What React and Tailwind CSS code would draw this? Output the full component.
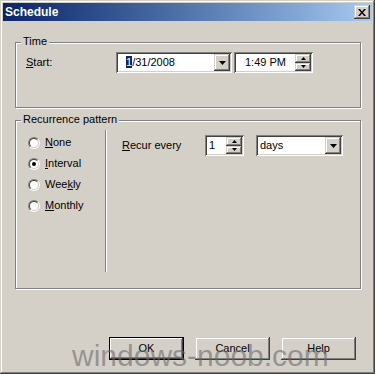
import React from "react";

const raised =
  "shadow-[inset_-1px_-1px_0_#404040,inset_1px_1px_0_#d4d0c8,inset_-2px_-2px_0_#808080,inset_2px_2px_0_#fff]";
const sunken =
  "shadow-[inset_1px_1px_0_#808080,inset_-1px_-1px_0_#fff,inset_2px_2px_0_#404040,inset_-2px_-2px_0_#d4d0c8]";

const DownArrow = () => (
  <svg width="7" height="4" viewBox="0 0 7 4">
    <path d="M0 0h7L3.5 4z" fill="#000" />
  </svg>
);

const DropButton = () => (
  <div className={`w-[16px] h-[17px] bg-[#d4d0c8] flex items-center justify-center ${raised}`}>
    <DownArrow />
  </div>
);

const Spin = () => (
  <div className="flex flex-col w-[16px] h-[17px]">
    <div className={`flex-1 bg-[#d4d0c8] flex items-center justify-center ${raised}`}>
      <svg width="5" height="3" viewBox="0 0 5 3">
        <path d="M2.5 0L5 3H0z" fill="#000" />
      </svg>
    </div>
    <div className={`flex-1 bg-[#d4d0c8] flex items-center justify-center ${raised}`}>
      <svg width="5" height="3" viewBox="0 0 5 3">
        <path d="M0 0h5L2.5 3z" fill="#000" />
      </svg>
    </div>
  </div>
);

const Radio = ({ checked, children }) => (
  <div className="flex items-center gap-[5px] h-[13px]">
    <div className="w-[12px] h-[12px] rounded-full border border-t-[#808080] border-l-[#808080] border-b-white border-r-white">
      <div className="w-full h-full rounded-full bg-white border border-t-[#404040] border-l-[#404040] border-b-[#d4d0c8] border-r-[#d4d0c8] flex items-center justify-center">
        {checked && <div className="w-[4px] h-[4px] rounded-full bg-black" />}
      </div>
    </div>
    <span>{children}</span>
  </div>
);

const Group = ({ label, className, children }) => (
  <div
    className={`relative ml-[12px] w-[346px] border border-[#808080] shadow-[1px_1px_0_#fff,inset_1px_1px_0_#fff] ${className}`}
  >
    <span className="absolute -top-[8px] left-[5px] bg-[#d4d0c8] px-[2px] leading-[13px]">{label}</span>
    {children}
  </div>
);

const Button = ({ children, isDefault }) => (
  <button
    className={`w-[75px] h-[23px] bg-[#d4d0c8] text-[11px] ${
      isDefault
        ? "border border-black shadow-[inset_-1px_-1px_0_#404040,inset_1px_1px_0_#fff,inset_-2px_-2px_0_#808080]"
        : raised
    }`}
  >
    {children}
  </button>
);

export default function App() {
  return (
    <div
      className="relative w-[375px] h-[374px] bg-[#d4d0c8] p-[3px] overflow-hidden text-[11px] text-black shadow-[inset_-1px_-1px_0_#404040,inset_1px_1px_0_#d4d0c8,inset_-2px_-2px_0_#808080,inset_2px_2px_0_#fff]"
      style={{ fontFamily: '"Liberation Sans", Arial, sans-serif' }}
    >
      {/* Title bar */}
      <div className="h-[18px] bg-gradient-to-r from-[#0a246a] to-[#a6caf0] flex items-center justify-between pl-[2px] pr-[2px]">
        <span className="text-white font-bold text-[12px]">Schedule</span>
        <div className={`w-[16px] h-[14px] bg-[#d4d0c8] flex items-center justify-center ${raised}`}>
          <svg width="8" height="7" viewBox="0 0 8 7">
            <path d="M0 0h2l2 2.5L6 0h2L5 3.5 8 7H6L4 4.5 2 7H0l3-3.5z" fill="#000" />
          </svg>
        </div>
      </div>

      {/* Time */}
      <Group label="Time" className="mt-[21px] h-[66px]">
        <div className="flex items-center mt-[9px]">
          <span className="ml-[10px] w-[90px]">
            <u>S</u>tart:
          </span>
          <div className={`w-[116px] h-[21px] bg-white flex items-center justify-between pl-[10px] pr-[2px] ${sunken}`}>
            <span>
              <span className="bg-[#0a246a] text-white">1</span>/31/2008
            </span>
            <DropButton />
          </div>
          <div className={`ml-[2px] w-[79px] h-[21px] bg-white flex items-center justify-between pl-[11px] pr-[2px] ${sunken}`}>
            <span>1:49 PM</span>
            <Spin />
          </div>
        </div>
      </Group>

      {/* Recurrence pattern */}
      <Group label="Recurrence pattern" className="mt-[12px] h-[169px]">
        <div className="flex h-full">
          <div className="flex flex-col gap-[8px] pt-[15px] pl-[12px] w-[89px]">
            <Radio>
              <u>N</u>one
            </Radio>
            <Radio checked>
              <u>I</u>nterval
            </Radio>
            <Radio>
              Wee<u>k</u>ly
            </Radio>
            <Radio>
              <u>M</u>onthly
            </Radio>
          </div>
          <div className="mt-[9px] h-[142px] w-[1px] bg-[#808080] shadow-[1px_0_0_#fff]" />
          <div className="flex items-start pt-[14px] pl-[16px]">
            <span className="w-[83px] leading-[21px]">
              <u>R</u>ecur every
            </span>
            <div className={`w-[39px] h-[21px] bg-white flex items-center justify-between pl-[4px] pr-[2px] ${sunken}`}>
              <span>1</span>
              <Spin />
            </div>
            <div className={`ml-[12px] w-[87px] h-[21px] bg-white flex items-center justify-between pl-[4px] pr-[2px] ${sunken}`}>
              <span>days</span>
              <DropButton />
            </div>
          </div>
        </div>
      </Group>

      {/* Buttons */}
      <div className="flex justify-end gap-[11px] mt-[48px] pr-[16px]">
        <Button isDefault>OK</Button>
        <Button>Cancel</Button>
        <Button>Help</Button>
      </div>

      {/* Watermark */}
      <div className="absolute left-[72px] top-[339px] text-[30px] leading-[34px] text-[#6a6a6a]/60 pointer-events-none">
        windows-noob.com
      </div>
    </div>
  );
}
